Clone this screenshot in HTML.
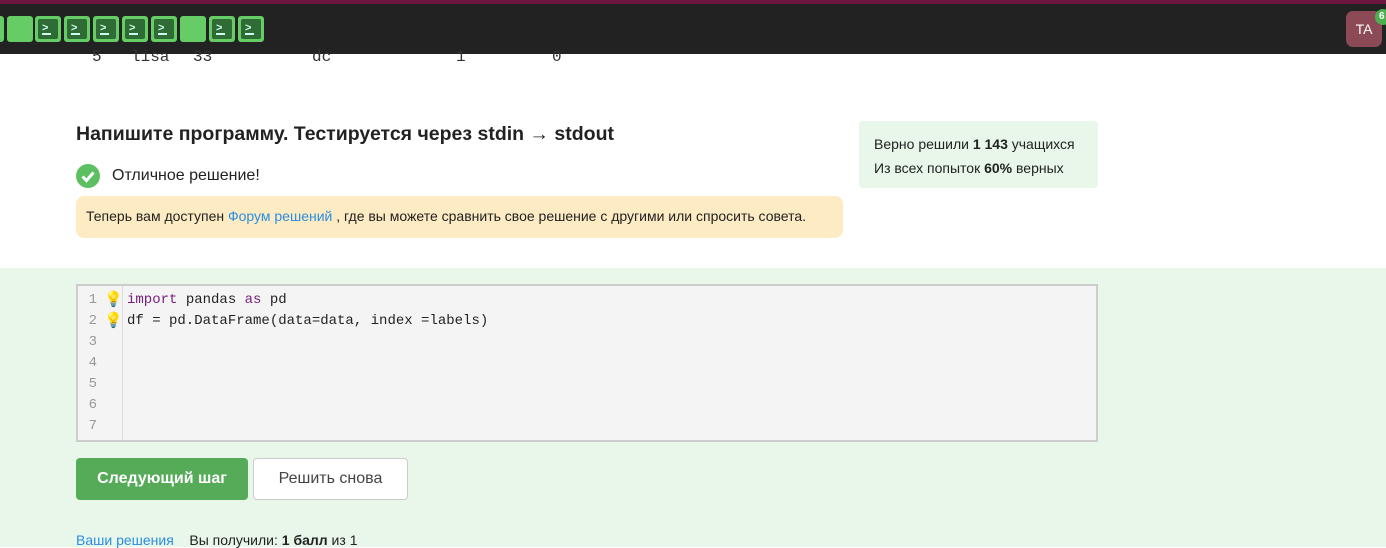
<!DOCTYPE html>
<html><head><meta charset="utf-8"><style>
*{margin:0;padding:0;box-sizing:border-box}
body{width:1386px;height:547px;overflow:hidden;background:#fff;font-family:"Liberation Sans",sans-serif;position:relative;color:#222}
.ab{position:absolute}
.top{left:0;top:0;width:1386px;height:54px;background:#222}
.strip{left:0;top:0;width:1386px;height:4px;background:#6b1540}
.sq{position:absolute;top:16px;width:26px;height:26px;background:#66cc66;border-radius:3px}
.sq i{position:absolute;left:3px;top:3px;width:20px;height:20px;background:#2f6b34;border-radius:2px;color:#cfe;font-style:normal;font-size:11px;line-height:18px;padding-left:4px;font-weight:bold}
.sq i:after{content:"";position:absolute;left:4px;bottom:4px;width:9px;height:2px;background:#cfe}
.mono{font-family:"Liberation Mono",monospace}
.row span{position:absolute;top:48px;font-size:16px;color:#333}
.green{left:0;top:268px;width:1386px;height:279px;background:#e8f7e9}
</style></head><body>
<div class="ab top"></div><div class="ab strip"></div>
<div class="sq" style="left:-22px"></div>
<div class="sq" style="left:7px"></div>
<div class="sq" style="left:35px"><i>&gt;</i></div>
<div class="sq" style="left:64px"><i>&gt;</i></div>
<div class="sq" style="left:93px"><i>&gt;</i></div>
<div class="sq" style="left:122px"><i>&gt;</i></div>
<div class="sq" style="left:151px"><i>&gt;</i></div>
<div class="sq" style="left:180px"></div>
<div class="sq" style="left:209px"><i>&gt;</i></div>
<div class="sq" style="left:238px"><i>&gt;</i></div>
<div class="ab" style="left:1346px;top:11px;width:36px;height:36px;border-radius:7px;background:#8b4a55;color:#fff;font-size:14px;text-align:center;line-height:36px">TA</div>
<div class="ab" style="left:1375px;top:9px;width:16px;height:16px;border-radius:8px;background:#4caf50;color:#fff;font-size:10px;font-weight:bold;line-height:16px;padding-left:4px">6</div>
<div class="mono row"><span style="left:92px">5</span><span style="left:131px">lisa</span><span style="left:193px">33</span><span style="left:312px">dc</span><span style="left:456px">1</span><span style="left:552px">0</span></div>
<div class="ab" style="left:76px;top:123px;font-size:19.5px;font-weight:bold;color:#222">Напишите программу. Тестируется через stdin → stdout</div>
<svg class="ab" style="left:76px;top:164px" width="24" height="24"><circle cx="12" cy="12" r="12" fill="#5cbf61"/><path d="M6.5 12.5l4 4 7-8" stroke="#fff" stroke-width="3" fill="none"/></svg>
<div class="ab" style="left:112px;top:167px;font-size:16px;color:#222">Отличное решение!</div>
<div class="ab" style="left:76px;top:196px;width:767px;height:42px;background:#fdebc3;border-radius:8px;font-size:14px;line-height:40px;padding-left:10px">Теперь вам доступен <span style="color:#2a8ee0">Форум решений</span> , где вы можете сравнить свое решение с другими или спросить совета.</div>
<div class="ab" style="left:859px;top:121px;width:239px;height:67px;background:#e8f7e9;border-radius:4px;font-size:14px;padding:11px 0 0 15px;line-height:24px">Верно решили <b>1 143</b> учащихся<br>Из всех попыток <b>60%</b> верных</div>
<div class="ab green"></div>
<div class="ab" style="left:76px;top:284px;width:1022px;height:158px;background:#f4f4f4;border:2px solid #cdcdcd"></div>
<div class="ab" style="left:122px;top:286px;width:1px;height:154px;background:#ddd"></div>
<div class="ab mono" style="left:88px;top:290px;font-size:14px;line-height:21px;color:#999;width:9px;text-align:right">1<br>2<br>3<br>4<br>5<br>6<br>7</div>
<div class="ab" style="left:104px;top:289px;font-size:15px;line-height:21px">💡<br>💡</div>
<div class="ab mono" style="left:127px;top:290px;font-size:14px;line-height:21px;color:#222;white-space:pre"><span style="color:#77217a">import</span> pandas <span style="color:#77217a">as</span> pd
df = pd.DataFrame(data=data, index =labels)</div>
<div class="ab" style="left:76px;top:458px;width:172px;height:42px;background:#55ab58;border-radius:4px;color:#fff;font-size:16px;font-weight:bold;text-align:center;line-height:42px">Следующий шаг</div>
<div class="ab" style="left:253px;top:458px;width:155px;height:42px;background:#fff;border:1px solid #ccc;border-radius:4px;color:#444;font-size:16px;text-align:center;line-height:40px">Решить снова</div>
<div class="ab" style="left:76px;top:532px;font-size:14px;color:#222"><span style="color:#2a8ee0">Ваши решения</span>&nbsp;&nbsp;&nbsp; Вы получили: <b>1 балл</b> из 1</div>
</body></html>
